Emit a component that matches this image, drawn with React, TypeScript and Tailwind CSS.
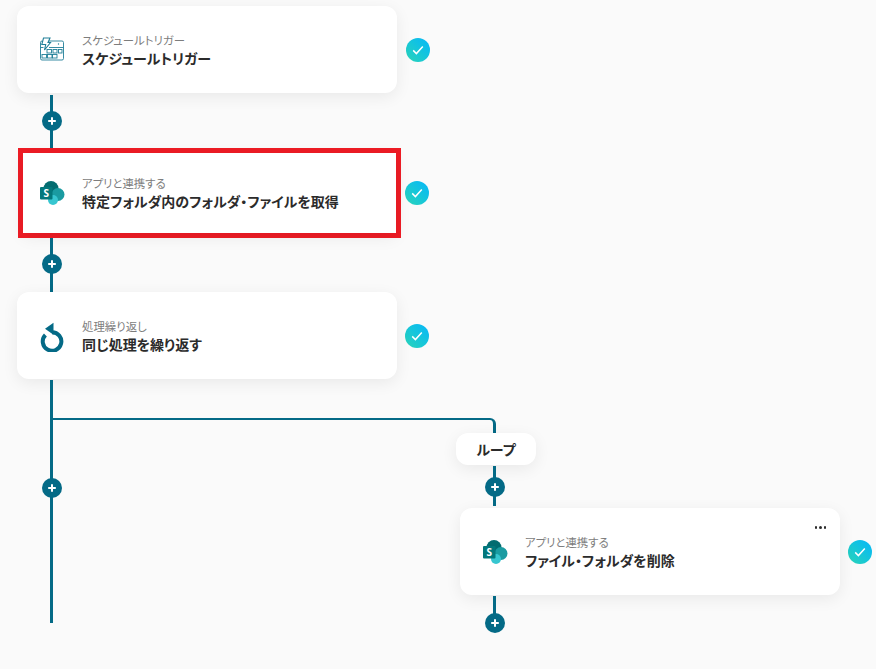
const LINE = "bg-[#046a86]";

function PlusDot() {
  return (
    <div className="relative z-10 flex h-5 w-5 items-center justify-center rounded-full bg-[#046a86]">
      <svg width="10" height="10" viewBox="0 0 10 10">
        <path d="M5 1.2v7.6M1.2 5h7.6" stroke="#fff" strokeWidth="2" />
      </svg>
    </div>
  );
}

function Check() {
  return (
    <div className="flex h-6 w-6 shrink-0 items-center justify-center rounded-full bg-linear-to-tr from-[#2bd4b6] to-[#0ab6fa]">
      <svg width="14" height="14" viewBox="0 0 14 14" fill="none">
        <path d="M2.2 7.4l3.2 3.2 6.4-7" stroke="#fff" strokeWidth="1.5" />
      </svg>
    </div>
  );
}

function ScheduleIcon() {
  return (
    <svg width="26" height="26" viewBox="0 0 26 26" fill="none" stroke="#217f98" strokeWidth="0.9">
      <path d="M10 4H23a1.5 1.5 0 0 1 1.5 1.5v16A1.5 1.5 0 0 1 23 23H3A1.5 1.5 0 0 1 1.5 21.5V5.5A1.5 1.5 0 0 1 3 4" />
      <path d="M1.5 10.5h3M10 10.5h14.5" />
      <path d="M4.5 1h6.5l-2 4.5h2.5l-6 7.5 1.2-5.5H2.8z" fill="#fff" strokeWidth="1.1" />
      <rect x="8" y="12.5" width="4.5" height="3.5" />
      <rect x="14" y="12.5" width="4" height="3.5" />
      <rect x="19.5" y="12.5" width="3.5" height="3.5" />
      <rect x="3" y="17.5" width="4.5" height="3.5" />
      <rect x="8.5" y="17.5" width="4.5" height="3.5" />
      <rect x="13.5" y="17.5" width="4.5" height="3.5" />
      <circle cx="19.5" cy="7" r="0.7" fill="#217f98" stroke="none" />
    </svg>
  );
}

function SharePointIcon() {
  return (
    <svg width="26" height="26" viewBox="0 0 26 26" className="ml-[1px]">
      <circle cx="11" cy="8.5" r="7.5" fill="#036c70" />
      <circle cx="18" cy="14.5" r="6.5" fill="#1a9ba1" />
      <circle cx="13" cy="20" r="5" fill="#37c6d0" />
      <rect x="0" y="7" width="12.5" height="12.5" rx="1" fill="#03787c" />
      <text x="6.2" y="17" textAnchor="middle" fontSize="10" fontWeight="700" fill="#fff" fontFamily="'Open Sans', sans-serif">
        S
      </text>
    </svg>
  );
}

function LoopIcon() {
  return (
    <svg width="26" height="32" viewBox="0 0 26 32" fill="none">
      <path d="M13 12.2A9.3 9.3 0 1 1 6.4 15" stroke="#046a86" strokeWidth="4" />
      <path d="M14.500 2.800L6 8.700 14.500 14.800z" fill="#046a86" />
    </svg>
  );
}

type CardProps = {
  icon: React.ReactNode;
  label: string;
  title: string;
  menu?: boolean;
  className?: string;
};

function Card({ icon, label, title, menu, className = "" }: CardProps) {
  return (
    <div className={`relative flex h-[87px] w-[380px] items-center rounded-xl bg-white pl-[22px] shadow-[0_4px_16px_rgba(0,0,0,0.07)] ${className}`}>
      <div className="flex w-[43px] shrink-0">{icon}</div>
      <div className="flex flex-col">
        <span className="text-[11.4px] leading-[16px] text-[#7d7d7d]">{label}</span>
        <span className="text-[14px] font-bold leading-[20px] text-[#2b2b2b]">{title}</span>
      </div>
      {menu && (
        <div className="absolute right-[14px] top-[18px] flex gap-[2px]">
          <span className="h-[2.5px] w-[2.5px] rounded-full bg-[#2b2b2b]" />
          <span className="h-[2.5px] w-[2.5px] rounded-full bg-[#2b2b2b]" />
          <span className="h-[2.5px] w-[2.5px] rounded-full bg-[#2b2b2b]" />
        </div>
      )}
    </div>
  );
}

function Connector({ height, dotAt }: { height: number; dotAt: string }) {
  return (
    <div className="relative w-[3px]" style={{ height }}>
      <div className={`h-full w-[3px] ${LINE}`} />
      <div className={`absolute left-[-8.5px] ${dotAt}`}>
        <PlusDot />
      </div>
    </div>
  );
}

export default function App() {
  return (
    <div className="relative h-[669px] w-[876px] overflow-hidden bg-[#fafafa] font-['Noto_Sans_CJK_JP',sans-serif] [font-feature-settings:'palt']">
      {/* main column */}
      <div className="flex flex-col pl-[17px] pt-[6px]">
        <div className="flex items-center gap-[9px]">
          <Card icon={<ScheduleIcon />} label="スケジュールトリガー" title="スケジュールトリガー" />
          <Check />
        </div>
        <div className="ml-[33px] mt-[2px]">
          <Connector height={53} dotAt="top-[16px]" />
        </div>
        <div className="flex items-center gap-[4px]">
          <div className="ml-[1px] border-[5px] border-[#ee1c25]">
            <Card className="!h-[80px] !w-[373px] !rounded-none !pl-[16px]" icon={<SharePointIcon />} label="アプリと連携する" title="特定フォルダ内のフォルダ・ファイルを取得" />
          </div>
          <Check />
        </div>
        <div className="ml-[33px]">
          <Connector height={54} dotAt="top-[16px]" />
        </div>
        <div className="flex items-center gap-[8px]">
          <Card icon={<LoopIcon />} label="処理繰り返し" title="同じ処理を繰り返す" />
          <Check />
        </div>
        <div className="ml-[33px] mt-[1px]">
          <Connector height={243} dotAt="top-[98px]" />
        </div>
      </div>

      {/* loop branch */}
      <div className="absolute left-[52px] top-[418px] flex flex-col">
        <div className="h-[15px] w-[444px] rounded-tr-md border-r-[3px] border-t-[2px] border-[#046a86]" />
        <div className="ml-[404px] flex h-8 w-20 items-center justify-center rounded-[12px] bg-white text-[14px] font-bold text-[#2b2b2b] shadow-[0_4px_16px_rgba(0,0,0,0.07)]">
          ループ
        </div>
        <div className="ml-[408px] flex flex-col">
          <div className="ml-[33px] mt-[1px]">
            <Connector height={40} dotAt="top-[11px]" />
          </div>
          <div className="mt-[2px] flex items-center gap-2">
            <Card menu icon={<SharePointIcon />} label="アプリと連携する" title="ファイル・フォルダを削除" />
            <Check />
          </div>
          <div className="ml-[33px] mt-[1px]">
            <Connector height={26} dotAt="top-[17px]" />
          </div>
        </div>
      </div>
    </div>
  );
}
